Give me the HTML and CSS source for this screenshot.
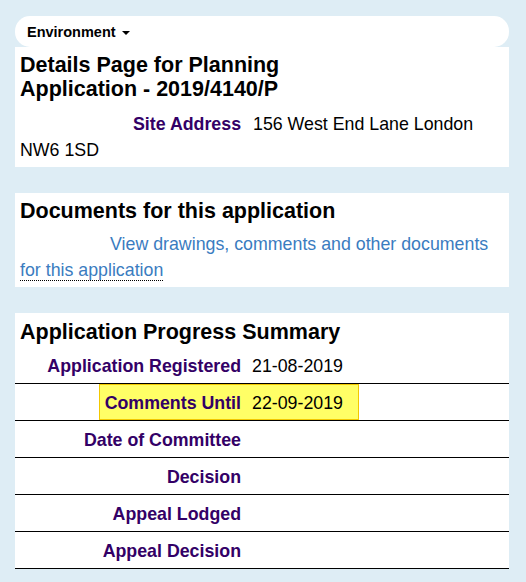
FILE: index.html
```html
<!DOCTYPE html>
<html>
<head>
<meta charset="utf-8">
<link rel="stylesheet" href="styles.css">
</head>
<body>
<div class="page">
  <nav class="navbar"><span class="nav-item">Environment<span class="caret"></span></span></nav>

  <section class="panel first">
    <h1 class="title">Details Page for Planning Application - 2019/4140/P</h1>
    <p class="address"><span class="label">Site Address</span> <span class="value">156 West End Lane London NW6 1SD</span></p>
  </section>

  <section class="panel">
    <h2 class="title">Documents for this application</h2>
    <p class="docs"><a class="doclink" href="#">View drawings, comments and other documents <span class="dotted">for this application</span></a></p>
  </section>

  <section class="panel progress">
    <h2 class="title">Application Progress Summary</h2>
    <div class="row"><span class="rlabel">Application Registered</span><span class="rvalue">21-08-2019</span></div>
    <div class="row"><div class="hl"><span class="hlabel">Comments Until</span><span class="rvalue">22-09-2019</span></div></div>
    <div class="row"><span class="rlabel">Date of Committee</span><span class="rvalue"></span></div>
    <div class="row"><span class="rlabel">Decision</span><span class="rvalue"></span></div>
    <div class="row"><span class="rlabel">Appeal Lodged</span><span class="rvalue"></span></div>
    <div class="row"><span class="rlabel">Appeal Decision</span><span class="rvalue"></span></div>
  </section>
</div>
</body>
</html>
```

FILE: styles.css
```css
html, body {
  margin: 0;
  padding: 0;
}
body {
  background: #deedf5;
  font-family: "Liberation Sans", Arial, sans-serif;
  color: #000;
}
.page {
  width: 494px;
  margin-left: 15px;
  padding-top: 16px;
}
.navbar {
  background: #fff;
  border-radius: 15px;
  height: 31px;
  box-sizing: border-box;
  padding: 7px 12px 0;
  font-size: 14.5px;
  font-weight: bold;
  line-height: 18px;
}
.caret {
  display: inline-block;
  width: 0;
  height: 0;
  margin-left: 6px;
  vertical-align: middle;
  border-top: 4px solid #000;
  border-left: 4px solid transparent;
  border-right: 4px solid transparent;
}
.panel {
  background: #fff;
  margin-top: 26px;
  padding: 6px 5px 4px;
}
.panel.first {
  margin-top: 0;
}
.title {
  margin: 0;
  font-size: 21.5px;
  font-weight: bold;
  line-height: 24px;
}
.first .title {
  width: 300px;
}
.address {
  margin: 10px 0 0;
  font-size: 17.8px;
  line-height: 26px;
  text-indent: 113px;
}
.label {
  margin-right: 7px;
  font-weight: bold;
  color: #330066;
}
.docs {
  margin: 8px 0 0;
  font-size: 17.8px;
  line-height: 26px;
  text-indent: 90px;
}
.doclink {
  color: #3a7cbf;
  text-decoration: none;
}
.dotted {
  border-bottom: 1px dotted #000;
}
.progress {
  padding: 0;
}
.progress .title {
  padding: 7px 5px 0;
  margin-bottom: 3px;
}
.row {
  display: flex;
  height: 37px;
  box-sizing: border-box;
  border-bottom: 1px solid #000;
  font-size: 17.8px;
  line-height: 26px;
}
.rlabel {
  width: 226px;
  text-align: right;
  font-weight: bold;
  color: #330066;
  padding-top: 6px;
}
.rvalue {
  margin-left: 11px;
  padding-top: 6px;
}
.hl {
  display: flex;
  margin-left: 84px;
  width: 260px;
  height: 36px;
  box-sizing: border-box;
  background: #ffff66;
  border: 1px solid #f2c800;
}
.hlabel {
  width: 141px;
  text-align: right;
  font-weight: bold;
  color: #330066;
  padding-top: 5px;
}
.hl .rvalue {
  padding-top: 5px;
}
```
